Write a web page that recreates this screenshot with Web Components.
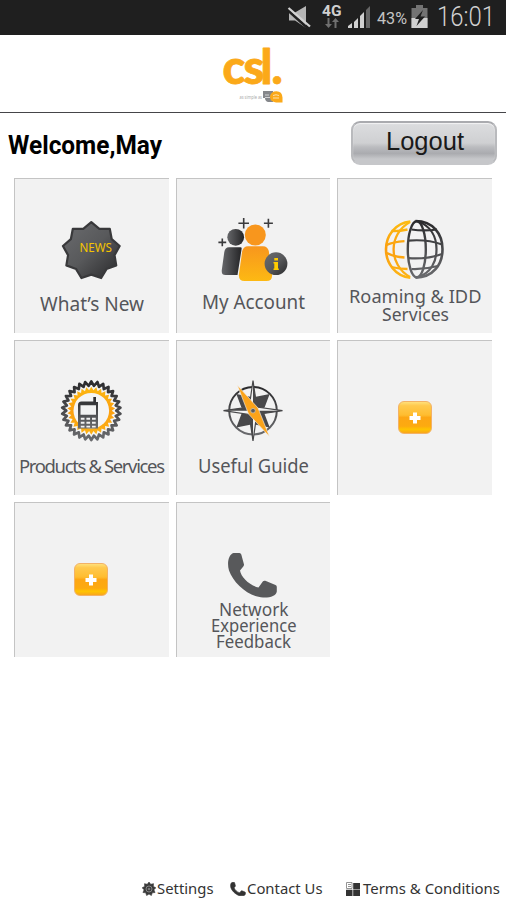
<!DOCTYPE html>
<html lang="en">
<head>
<meta charset="utf-8">
<title>csl.</title>
<style>
  html, body { margin: 0; height: 100%; background: #fff; overflow: hidden; }
</style>
</head>
<body>
<csl-app></csl-app>

<script>
// zig-zag outline used for the badge and the gears
const burst = (cx, cy, outer, inner, points) => {
  let d = "";
  for (let i = 0; i < points * 2; i++) {
    const r = i % 2 ? inner : outer;
    const a = (Math.PI * i) / points - Math.PI / 2;
    d += `${i ? "L" : "M"}${(cx + r * Math.cos(a)).toFixed(2)} ${(cy + r * Math.sin(a)).toFixed(2)}`;
  }
  return d + "Z";
};

const gradients = `
  <defs>
    <linearGradient id="dark" x1="0" y1="0" x2="0" y2="1"><stop offset="0" stop-color="#2b2b2d"/><stop offset="1" stop-color="#6a6b6e"/></linearGradient>
    <linearGradient id="globe" gradientUnits="userSpaceOnUse" x1="0" y1="42" x2="0" y2="100"><stop offset="0" stop-color="#29292b"/><stop offset="1" stop-color="#6a6b6e"/></linearGradient>
    <linearGradient id="sun" gradientUnits="userSpaceOnUse" x1="0" y1="42" x2="0" y2="100"><stop offset="0" stop-color="#fdbd10"/><stop offset=".5" stop-color="#fb9f10"/><stop offset="1" stop-color="#fdb515"/></linearGradient>
    <linearGradient id="badge" x1="0" y1="0" x2="1" y2="1"><stop offset="0" stop-color="#6b6c6f"/><stop offset=".5" stop-color="#58595b"/><stop offset="1" stop-color="#29292b"/></linearGradient>
    <linearGradient id="body" x1="0" y1="0" x2="1" y2="0"><stop offset="0" stop-color="#66676a"/><stop offset="1" stop-color="#242426"/></linearGradient>
    <linearGradient id="orange" x1="0" y1="0" x2="0" y2="1"><stop offset="0" stop-color="#f8961d"/><stop offset="1" stop-color="#fdb913"/></linearGradient>
  </defs>`;

const handset = "M57.5 51H63.500Q64.800 51 65.300 52.500L68 62.500Q68.200 63.500 67.300 64.500L64 68.500C65 75 73.500 83.500 82.500 85.500L86.800 79.500Q87.800 78.300 89.300 78.800L99.500 83Q101 83.700 100.800 85.300V89.500C100 94 94.500 95.800 87 95.500C73 95 57.500 81.500 53 68.500C50.800 61 52.500 52.500 57.500 51Z";

const icons = {
  news: `
    <path d="${burst(77.3, 73, 28.8, 23.6, 9)}" fill="url(#badge)" stroke="#39393b" stroke-width="2.200" stroke-linejoin="round"/>
    <text x="65.500" y="74.200" textLength="32.500" lengthAdjust="spacingAndGlyphs" font-family="Noto Sans, sans-serif" font-size="13" fill="#f5c400">NEWS</text>`,
  account: `
    <circle cx="59.700" cy="59.300" r="8.400" fill="url(#body)"/>
    <path d="M53 69.200H64.500Q66 69.200 65.600 71L61.500 97H49.500Q45.200 97 45.800 92L48.300 74Q49 69.200 53 69.200Z" fill="url(#body)"/>
    <circle cx="79.300" cy="57" r="10.500" fill="#f8961d"/>
    <path d="M72 68.300H87Q91.500 68.300 92.800 73L96 96Q96.800 103 90.500 103H68.500Q62.200 103 63 96L66.200 73Q67.500 68.300 72 68.300Z" fill="url(#orange)"/>
    <circle cx="100" cy="85.700" r="11.400" fill="url(#badge)"/>
    <path d="M98.300 80h3.700v2.500h-3.700zM98.300 84h3.700v8h-3.700z" fill="#fc0"/>
    <path d="M97.500 84h2v1.500h-2zM97.500 90.500h5.300V92h-5.300z" fill="#fc0"/>
    <path d="M67.700 40v10.400M62.400 45.200h10.600M92.400 40.800v9M87.900 45.200h9M46.300 60.400v7.800M42.400 64.400h7.800" stroke="#3b3b3d" stroke-width="1.600"/>`,
  globe: `
    <g fill="none" stroke="url(#sun)" stroke-width="2.300">
      <path d="M73.300 43.500C58 45 49 58 49 71.300S58 98.500 73.300 99.600" stroke-width="2.600"/>
      <path d="M73 44C62 50 56.600 61 56.600 71.300S62 93 73 99"/>
      <path d="M54.500 53Q61 53.500 70.500 51.500M49.500 67Q56 64 67.500 63.200M49.800 75Q57 79 67.500 79.500M54.500 89Q62 91 70.500 91"/>
    </g>
    <g fill="none" stroke="url(#globe)" stroke-width="2.200">
      <path d="M78.500 43C96 43 105.500 56 105.500 71.300S96 99.600 78.500 99.600" stroke-width="2.600"/>
      <ellipse cx="79.800" cy="71.300" rx="9" ry="28" stroke-width="2.400"/>
      <path d="M81 43.500C94 48 99.500 59 99.500 71.300S94 95 81 99"/>
      <path d="M74.500 51.500Q87 53.300 100 51.500M71.500 62.600Q90 61 105 66.500M71.500 80.200Q90 81.500 105 76M74.500 91Q88 91.500 101 88"/>
    </g>`,
  products: `
    <path d="${burst(77.3, 70.7, 29.3, 25, 30)}" fill="#f4f4f4" stroke="url(#dark)" stroke-width="2.700" stroke-linejoin="round"/>
    <path d="${burst(77.3, 70.7, 24, 20.5, 30)}" fill="url(#sun)"/>
    <circle cx="77.300" cy="70.700" r="17.800" fill="#f4f4f4"/>
    <path d="M79.300 57h2.700v5h2v26.500H64V65q0-3.500 3.500-3.500h11.800z" fill="url(#dark)"/>
    <path d="M66.500 65.300h15.500v9.500H66.500zM66.800 77.800h3.700v2h-3.700zM72.400 77.800h3.700v2h-3.700zM78 77.800h3.700v2H78zM66.800 81.800h3.700v2h-3.700zM72.400 81.800h3.700v2h-3.700zM78 81.800h3.700v2H78zM66.800 85.700h3.700v1.800h-3.700zM72.400 85.700h3.700v1.800h-3.700zM78 85.700h3.700v1.800H78z" fill="#f2f2f2"/>`,
  compass: `
    <circle cx="77" cy="70.700" r="23.800" fill="none" stroke="url(#dark)" stroke-width="2"/>
    <path d="M92.500 55L88 67 77 70.700 80.500 57.500ZM61.500 55L73.500 57.500 77 70.700 66 67ZM61.500 86.500L66 74.500 77 70.700 73.500 84ZM92.500 86.500L80.500 84 77 70.700 88 74.500Z" fill="#48484a" stroke="#48484a" stroke-width="1.500"/>
    <path d="M77 40.500L80.800 67 106.500 70.700 80.800 74.500 77 101 73.200 74.500 47.500 70.700 73.200 67Z" fill="#f2f2f2" stroke="#48484a" stroke-width="1.200"/>
    <path d="M77 40.500L81 67 77 70.700ZM106.500 70.700L81 74.500 77 70.700ZM77 101L73 74.500 77 70.700ZM47.500 70.700L73 67 77 70.700Z" fill="#48484a"/>
    <path d="M61.400 45.300L82 68 93.400 96.500 72.500 74Z" fill="#fba31a" stroke="#f2f2f2" stroke-width=".6"/>
    <circle cx="77" cy="70.700" r="2.300" fill="#5b5b5d" stroke="#c9c0ae" stroke-width=".8"/>`,
  phone: `<path d="${handset}" fill="#58595b"/>`,
};

// one line of text fitted to a given width
class FitText extends HTMLElement {
  constructor() {
    super();
    this.attachShadow({ mode: "open" });
  }
  connectedCallback() {
    const width = this.getAttribute("width");
    const size = this.getAttribute("size");
    const line = this.getAttribute("line") || 18;
    const base = this.getAttribute("base") || 14;
    const adjust = this.hasAttribute("spacing") ? "spacing" : "spacingAndGlyphs";
    this.shadowRoot.innerHTML = `
      <style>
        :host { display: block; flex: none; width: ${width}px; height: ${line}px; }
        svg { display: block; overflow: visible; }
        text { fill: currentColor; }
      </style>
      <svg width="${width}" height="${line}">
        <text y="${base}" font-size="${size}" textLength="${width}" lengthAdjust="${adjust}">${this.getAttribute("text").replace(/&/g, "&amp;")}</text>
      </svg>`;
  }
}
customElements.define("fit-text", FitText);

class StatusBar extends HTMLElement {
  constructor() {
    super();
    this.attachShadow({ mode: "open" }).innerHTML = `
      <style>
        :host { display: flex; align-items: flex-start; justify-content: flex-end; height: 35px; padding-right: 11px; box-sizing: border-box; background: #1f1f1f; color: #c4c4c4; font-family: Roboto, sans-serif; }
        .net { display: flex; flex-direction: column; align-items: center; width: 20px; margin: 2px 5px 0 11px; font-weight: 700; color: #d0d0d0; }
        .bat { margin: 5px 9px 0 4px; }
        .clock { font-weight: 300; color: #d2d2d2; }
        svg { display: block; flex: none; }
      </style>
      <svg width="24" height="35" viewBox="288 0 24 35"><path d="M290 12.500h6l11-6.500v22l-11-7.500h-6z" fill="#b5b5b5"/><path d="M288 9.500L309.500 29" stroke="#1f1f1f" stroke-width="2.500"/><path d="M289.500 8L311 26.500" stroke="#d2d2d2" stroke-width="2.300"/></svg>
      <div class="net">
        <fit-text text="4G" width="19.500" size="15.500" line="16" base="13.500"></fit-text>
        <svg width="14" height="11" viewBox="0 0 14 11"><path d="M2.500 0h2v6h2.500L3.500 10 0 6h2.500zM9.500 10h2V4H14L10.500 0 7 4h2.500z" fill="#707070"/></svg>
      </div>
      <svg width="24" height="35" viewBox="346 0 24 35"><path d="M347 28v-2l4-3v5zM353 28v-6l4-4v10zM359 28V16l4-4v16z" fill="#d0d0d0"/><path d="M365 28V10l4-4v22z" fill="#666"/></svg>
      <fit-text text="43%" width="30" size="17" line="35" base="23.500" style="margin-left:6px"></fit-text>
      <svg class="bat" width="17" height="24" viewBox="0 0 17 24"><path d="M5 0h7v3h4.500v20H.5V3H5z" fill="#737373"/><path d="M.5 13h16v10H.5z" fill="#d0d0d0"/><path d="M12 5L4 14h4l-2.500 7L14 11.500H9.500z" fill="#1f1f1f"/></svg>
      <fit-text class="clock" text="16:01" width="58" size="27" line="35" base="26"></fit-text>`;
  }
}
customElements.define("status-bar", StatusBar);

class BrandHeader extends HTMLElement {
  constructor() {
    super();
    this.attachShadow({ mode: "open" }).innerHTML = `
      <style>
        :host { display: flex; justify-content: center; height: 78px; box-sizing: border-box; background: #fff; border-bottom: 1px solid #454549; }
        svg { display: block; overflow: visible; }
      </style>
      <svg width="62" height="70" viewBox="222 35 62 70">
        <text x="222.500 243.500 260.500 271.500" y="83.500" font-family="Lato, sans-serif" font-weight="900" font-size="47" fill="#fba919" stroke="#fba919" stroke-width=".8" stroke-linejoin="round">csl.</text>
        <text x="239.500" y="98.800" textLength="22.500" lengthAdjust="spacingAndGlyphs" font-family="Noto Sans, sans-serif" font-size="4.600" fill="#aaa">as simple as</text>
        <path d="M263 91h10v11h-5q-3-1-3-4h-2z" fill="#85878b"/>
        <path d="M274 91.500q8-1.500 8.500 6v5H276q-6-1-6-5.500 0-4 4-5.500z" fill="#fba919"/>
        <path d="M265 95h4M265 97.500h5M273 95.500q3-1.500 6 0M273 98h6" stroke="#fff" stroke-width=".8" fill="none" opacity=".8"/>
      </svg>`;
  }
}
customElements.define("brand-header", BrandHeader);

class WelcomeBar extends HTMLElement {
  constructor() {
    super();
    this.attachShadow({ mode: "open" }).innerHTML = `
      <style>
        :host { display: flex; justify-content: space-between; padding: 8px 9px 0 8px; height: 65px; box-sizing: border-box; font-family: Roboto, sans-serif; font-weight: 700; color: #000; }
        button { display: flex; justify-content: center; width: 146px; height: 44px; padding: 0; box-sizing: border-box; border: 2px solid; border-color: #aaabaf #b9babd #c6c7ca; border-radius: 9px; color: #1a1a1a;
          background: linear-gradient(#dcdddf, #cfd0d2 50%, #bbbcbf 60%, #aaabaf 76%, #c6c7ca 90%);
          box-shadow: inset 0 1px 1px #f3f3f4; font-family: "Liberation Sans", sans-serif; font-weight: 400; }
        fit-text.out { margin-left: 2px; }
      </style>
      <fit-text text="Welcome,May" width="154" size="25" line="44" base="33"></fit-text>
      <button><fit-text class="out" text="Logout" width="78" size="25.300" line="40" base="27"></fit-text></button>`;
  }
}
customElements.define("welcome-bar", WelcomeBar);

class MenuTile extends HTMLElement {
  constructor() {
    super();
    this.attachShadow({ mode: "open" });
  }
  connectedCallback() {
    this.shadowRoot.innerHTML = `
      <style>
        :host { display: block; box-sizing: border-box; background: #f2f2f2; box-shadow: inset 1px 1px 0 #c4c4c4; color: #55565a; font-family: "Noto Sans", sans-serif; }
        svg { display: block; overflow: visible; }
        .label { display: flex; flex-direction: column; align-items: center; padding-left: 1px; margin-top: ${this.getAttribute("drop") || 0}px; }
      </style>
      <svg width="155" height="100" viewBox="0 0 155 100">${gradients}${icons[this.getAttribute("icon")]}</svg>
      <div class="label"><slot></slot></div>`;
  }
}
customElements.define("menu-tile", MenuTile);

class AddTile extends HTMLElement {
  constructor() {
    super();
    this.attachShadow({ mode: "open" }).innerHTML = `
      <style>
        :host { display: flex; align-items: center; justify-content: center; box-sizing: border-box; background: #f2f2f2; box-shadow: inset 1px 1px 0 #c4c4c4; }
        span { display: flex; align-items: center; justify-content: center; width: 34px; height: 33px; box-sizing: border-box; border: 1px solid #f3b266; border-radius: 6px;
          background: linear-gradient(#ffe07a, #ffc94d 12%, #ffbd30 42%, #fda614 50%, #fdaa10 78%, #ffc400 88%, #f9a61c); }
        svg { display: block; }
      </style>
      <span><svg width="12" height="12" viewBox="0 0 12 12"><path d="M4 .5h4V4h3.500v4H8v3.500H4V8H.5V4H4z" fill="#fff"/></svg></span>`;
  }
}
customElements.define("add-tile", AddTile);

class MenuGrid extends HTMLElement {
  constructor() {
    super();
    this.attachShadow({ mode: "open" }).innerHTML = `
      <style>
        :host { display: grid; grid-template-columns: repeat(3, 154.700px); grid-auto-rows: 155px; gap: 7px; padding-left: 14px; }
      </style>
      <slot></slot>`;
  }
}
customElements.define("menu-grid", MenuGrid);

class FooterLinks extends HTMLElement {
  constructor() {
    super();
    this.attachShadow({ mode: "open" }).innerHTML = `
      <style>
        :host { display: flex; justify-content: flex-end; align-items: center; height: 18px; margin-top: auto; padding: 0 6px 2px 0; color: #333; font-family: "Noto Sans", sans-serif; }
        a { display: flex; align-items: center; gap: 1px; }
        a + a { margin-left: 16px; }
        a.terms { margin-left: 24px; gap: 3px; }
        svg { display: block; flex: none; }
      </style>
      <a><svg width="14" height="14" viewBox="0 0 14 14"><path d="${burst(7, 7, 7, 5, 9)}" fill="#3a3a3a" stroke="#3a3a3a" stroke-width=".6"/><circle cx="7" cy="7" r="3" fill="none" stroke="#999" stroke-width=".8"/><circle cx="7" cy="7" r="1.300" fill="#777"/></svg>
        <fit-text text="Settings" width="56.500" size="14.800" line="18" base="14"></fit-text></a>
      <a><svg width="16" height="14" viewBox="51 50 51 46"><path d="${handset}" fill="#333" stroke="#333" stroke-width="2"/></svg>
        <fit-text text="Contact Us" width="75.500" size="14.800" line="18" base="14"></fit-text></a>
      <a class="terms"><svg width="14" height="14" viewBox="0 0 14 14"><path d="M7.200 1H14v6.200H7.200zM0 7.800h6.500V14H0zM7.200 7.800H14V14H7.200z" fill="#333"/><path d="M.5.500h5.500v6H.5zM2 2.500h3M2 4.500h3" fill="none" stroke="#888" stroke-width=".9"/></svg>
        <fit-text text="Terms &amp; Conditions" width="137" size="14.800" line="18" base="14"></fit-text></a>`;
  }
}
customElements.define("footer-links", FooterLinks);

class CslApp extends HTMLElement {
  constructor() {
    super();
    this.attachShadow({ mode: "open" }).innerHTML = `
      <style>
        :host { display: flex; flex-direction: column; width: 506px; height: 900px; background: #fff; }
      </style>
      <status-bar></status-bar>
      <brand-header></brand-header>
      <welcome-bar></welcome-bar>
      <menu-grid>
        <menu-tile icon="news" drop="19"><fit-text text="What’s New" width="104" size="19"></fit-text></menu-tile>
        <menu-tile icon="account" drop="16.500"><fit-text text="My Account" width="103" size="19"></fit-text></menu-tile>
        <menu-tile icon="globe" drop="10.500">
          <fit-text text="Roaming &amp; IDD" width="132.500" size="18.500"></fit-text>
          <fit-text text="Services" width="67" size="18.500"></fit-text>
        </menu-tile>
        <menu-tile icon="products" drop="19"><fit-text text="Products &amp; Services" width="146" size="18.500" spacing></fit-text></menu-tile>
        <menu-tile icon="compass" drop="19"><fit-text text="Useful Guide" width="111" size="19"></fit-text></menu-tile>
        <add-tile></add-tile>
        <add-tile></add-tile>
        <menu-tile icon="phone">
          <fit-text text="Network" width="69.500" size="18" line="16"></fit-text>
          <fit-text text="Experience" width="85.500" size="18" line="16"></fit-text>
          <fit-text text="Feedback" width="75" size="18" line="16"></fit-text>
        </menu-tile>
      </menu-grid>
      <footer-links></footer-links>`;
  }
}
customElements.define("csl-app", CslApp);
</script>
</body>
</html>
